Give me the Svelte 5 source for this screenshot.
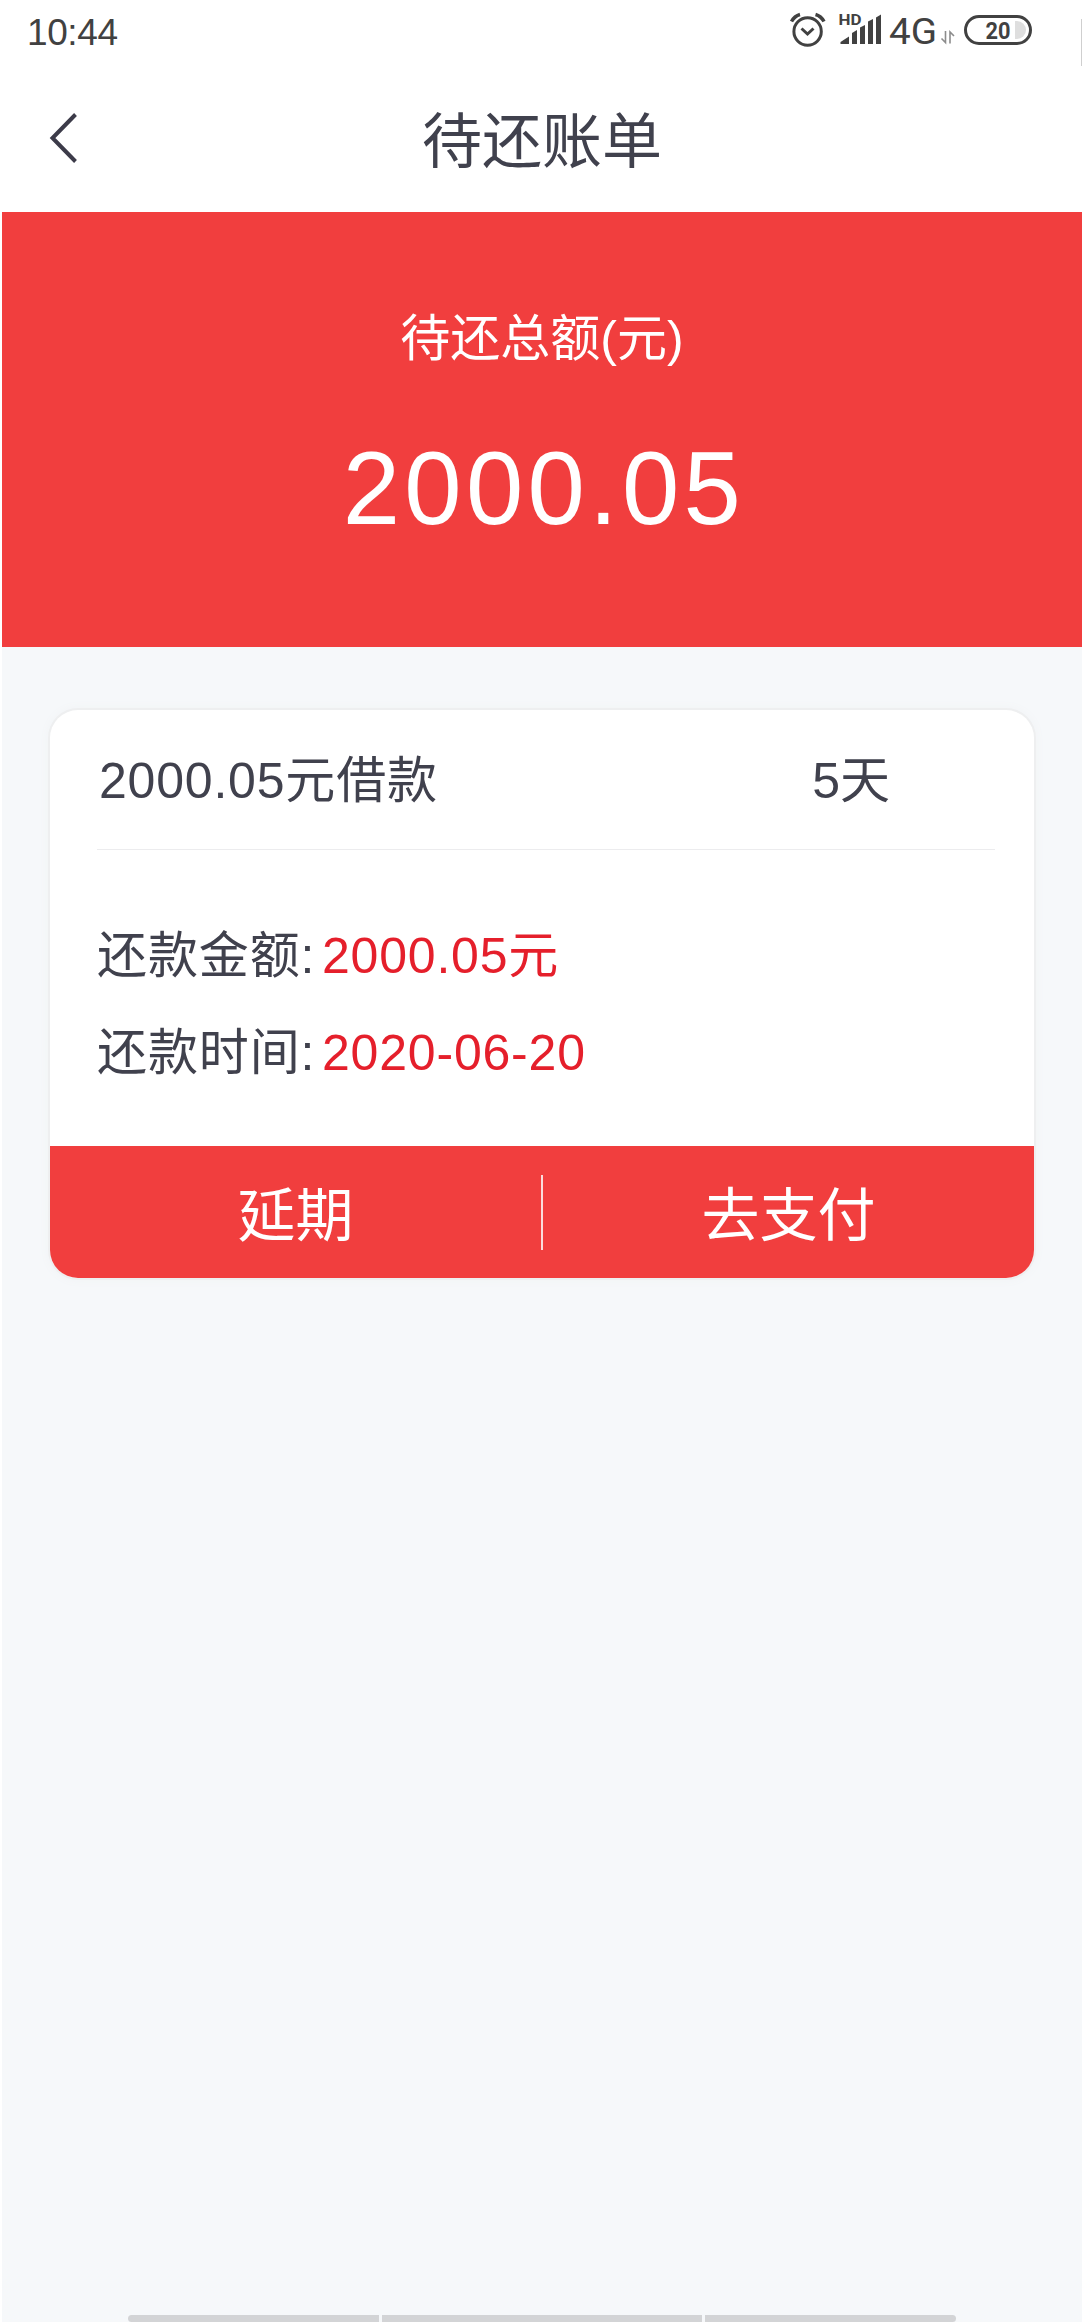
<script lang="ts">
	const time = '10:44';

	const bill = {
		total: '2000.05',
		days: 5,
		dueDate: '2020-06-20'
	};

	// Placeholder function for going back
	function goBack() {
		console.log('Back');
	}

	// Placeholder function for extending the bill
	function extendBill() {
		console.log('Extend');
	}

	// Placeholder function for opening the payment page
	function payBill() {
		console.log('Pay');
	}
</script>

<div class="page">
	<div class="status-bar">
		<span class="time">{time}</span>
		<svg class="status-icons" width="322" height="70" viewBox="760 0 322 70">
			<!-- alarm -->
			<g fill="none" stroke="#414141" stroke-width="3">
				<circle cx="807.6" cy="31.5" r="13.7" />
				<path d="M801.5 28.5l6 5.5 6-5.5" />
				<path d="M791.5 21.5q3-5.5 8.5-7M824 21.5q-3-5.5-8.5-7" stroke-width="3.5" />
			</g>
			<!-- signal -->
			<text class="hd" x="838.5" y="25" textLength="23" lengthAdjust="spacingAndGlyphs">HD</text>
			<g fill="#414141">
				<path d="M840.5 44v-2l8.5-5.5V44z" />
				<path d="M852 44V33l5-3v14z" />
				<path d="M860 44V27.5l5-2.5v19z" />
				<path d="M868 44V21.5l5-2.5v25z" />
				<path d="M876 44V17.5l5-3V44z" />
			</g>
			<text class="network" x="889" y="44" textLength="48" lengthAdjust="spacingAndGlyphs">4G</text>
			<path d="M945.5 31v11.5l-4-4M950 43.5V32l4 4" fill="none" stroke="#8c8c8c" stroke-width="1.6" />
			<!-- battery -->
			<rect x="965.5" y="16.5" width="65" height="27" rx="13.5" fill="none" stroke="#414141" stroke-width="3" />
			<path d="M1015 21h2a9 9 0 0 1 0 18h-2z" fill="#dedede" />
			<text class="battery" x="985.5" y="38.5" textLength="25" lengthAdjust="spacingAndGlyphs">20</text>
			<path d="M1081.5 19v47" stroke="#cfcfcf" />
		</svg>
	</div>

	<header class="header">
		<button class="back" on:click={goBack} aria-label="返回">
			<svg width="30" height="54" viewBox="0 0 30 54">
				<path d="M27.5 3.5L4.5 27l23 23.5" fill="none" stroke="#3c3b49" stroke-width="4" />
			</svg>
		</button>
		<h1>待还账单</h1>
	</header>

	<section class="summary">
		<p class="label">待还总额(元)</p>
		<p class="amount">{bill.total}</p>
	</section>

	<main class="content">
		<div class="card">
			<div class="card-head">
				<span>{bill.total}元借款</span>
				<span class="days">{bill.days}天</span>
			</div>
			<div class="card-body">
				<p class="row"><span class="name">还款金额:</span><span class="value">{bill.total}元</span></p>
				<p class="row"><span class="name">还款时间:</span><span class="value">{bill.dueDate}</span></p>
			</div>
			<div class="actions">
				<button on:click={extendBill}>延期</button>
				<span class="separator"></span>
				<button on:click={payBill}>去支付</button>
			</div>
		</div>
	</main>

	<footer class="nav-hint">
		<span></span>
		<span></span>
		<span></span>
	</footer>
</div>

<style>
	:global(body) {
		background: #fff;
	}

	.page {
		--red: #f13e3e;
		--text: #40414d;

		display: flex;
		flex-direction: column;
		height: 100vh;
		overflow: hidden;
		font-family: 'Liberation Sans', 'Noto Sans CJK SC', sans-serif;
		color: var(--text);
	}

	p,
	h1 {
		margin: 0;
		font-weight: 400;
	}

	button {
		padding: 0;
		border: none;
		background: none;
		font-family: inherit;
		color: inherit;
		cursor: pointer;
	}

	.status-bar {
		display: flex;
		justify-content: space-between;
		height: 70px;
		padding-left: 27px;
	}

	.time {
		font-size: 37px;
		line-height: 65px;
		letter-spacing: -0.4px;
		color: #414141;
	}

	.status-icons text {
		fill: #414141;
	}

	.hd {
		font: 700 15.5px Roboto, sans-serif;
	}

	.network {
		font: 400 36px Roboto, sans-serif;
	}

	.battery {
		font: 700 24px Roboto, sans-serif;
	}

	.header {
		display: grid;
		grid-template-columns: 100px 1fr 100px;
		align-items: center;
		height: 142px;
	}

	.back {
		height: 54px;
		padding-left: 48px;
		margin-bottom: 7px;
		text-align: left;
	}

	.back svg {
		display: block;
	}

	h1 {
		font-size: 60px;
		line-height: 88px;
		padding: 3px 0 0 2px;
		text-align: center;
	}

	.summary {
		height: 435px;
		margin-left: 2px;
		padding-top: 90px;
		box-sizing: border-box;
		background: var(--red);
		color: #fff;
		text-align: center;
	}

	.label {
		font-size: 50px;
		line-height: 74px;
	}

	.amount {
		margin-top: 54px;
		padding-left: 4px;
		font-size: 103px;
		line-height: 118px;
		letter-spacing: 4.3px;
	}

	.content {
		flex: 1;
		margin-left: 2px;
		padding: 63px 48px 0;
		background: #f6f8fa;
	}

	.card {
		border-radius: 28px;
		background: #fff;
		box-shadow: 0 0 0 2px #eeeff0, 0 0 10px 2px #f1f3f5;
		overflow: hidden;
	}

	.card-head {
		display: flex;
		justify-content: space-between;
		height: 139px;
		margin: 0 39px 0 47px;
		padding: 0 105px 0 2px;
		border-bottom: 1px solid #ececee;
		font-size: 50px;
		line-height: 142px;
		letter-spacing: 0.8px;
	}

	.days {
		letter-spacing: 0;
	}

	.card-body {
		height: 296px;
		padding: 57px 0 0 47px;
		box-sizing: border-box;
	}

	.row {
		display: flex;
		height: 97px;
		font-size: 50px;
		line-height: 98px;
		letter-spacing: 0.9px;
	}

	.name {
		width: 225px;
	}

	.value {
		color: #e51f2b;
		letter-spacing: 0.8px;
	}

	.actions {
		display: flex;
		align-items: center;
		height: 132px;
		background: var(--red);
		color: #fff;
	}

	.actions button {
		flex: 1;
		height: 100%;
		padding-bottom: 3px;
		font-size: 58px;
	}

	.separator {
		width: 2px;
		height: 75px;
		background: #fbdcdc;
	}

	.nav-hint {
		display: grid;
		grid-template-columns: 251px 320px 251px;
		gap: 3px;
		height: 7px;
		margin-left: 2px;
		padding-left: 126px;
		background: #f6f8fa;
	}

	.nav-hint span {
		background: #d3d4d6;
	}

	.nav-hint span:first-child {
		border-radius: 4px 0 0 4px;
	}

	.nav-hint span:last-child {
		border-radius: 0 4px 4px 0;
	}
</style>
